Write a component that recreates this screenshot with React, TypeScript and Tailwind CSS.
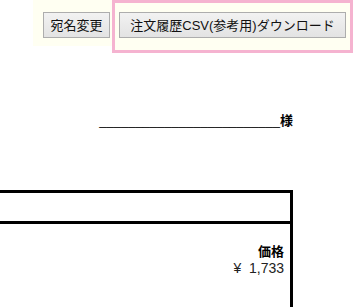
export default function App() {
  const font = { fontFamily: '"Liberation Sans", "Noto Sans CJK JP", sans-serif' };
  return (
    <div className="w-[353px] h-[307px] overflow-hidden bg-white text-black" style={font}>
      <div className="flex items-start pl-[33px]">
        <div className="h-[46px] w-[79px] bg-[#fffff2] pl-[10px] pt-[12px]">
          <button className="h-[26px] w-[67px] border border-[#adadad] bg-gradient-to-b from-[#f2f2f2] to-[#e3e3e3] text-[13px] leading-none text-[#111]">
            宛名変更
          </button>
        </div>
        <div className="h-[53px] w-[241px] border-[3px] border-[#f5b3d0] bg-[#fffff2] pl-[4px] pt-[9px]">
          <button className="h-[26px] w-[227px] border border-[#adadad] bg-gradient-to-b from-[#f2f2f2] to-[#e3e3e3] text-[13px] leading-none text-[#111] whitespace-nowrap">
            注文履歴CSV(参考用)ダウンロード
          </button>
        </div>
      </div>
      <div className="w-[293px] pt-[60px] text-right text-[13px] leading-[16px]">
        <span>_________________________</span>
        <span className="font-bold">様</span>
      </div>
      <div className="mt-[61px] w-[293px] border-t-[3px] border-r-[3px] border-black">
        <div className="h-[31px] border-b-[3px] border-black"></div>
        <div className="pr-[6px] pt-[19px] text-right leading-[17px]">
          <div className="font-bold text-[13px]">価格</div>
          <div className="text-[14px] text-[#222]">¥&nbsp;&nbsp;1,733</div>
        </div>
        <div className="h-[60px]"></div>
      </div>
    </div>
  );
}
